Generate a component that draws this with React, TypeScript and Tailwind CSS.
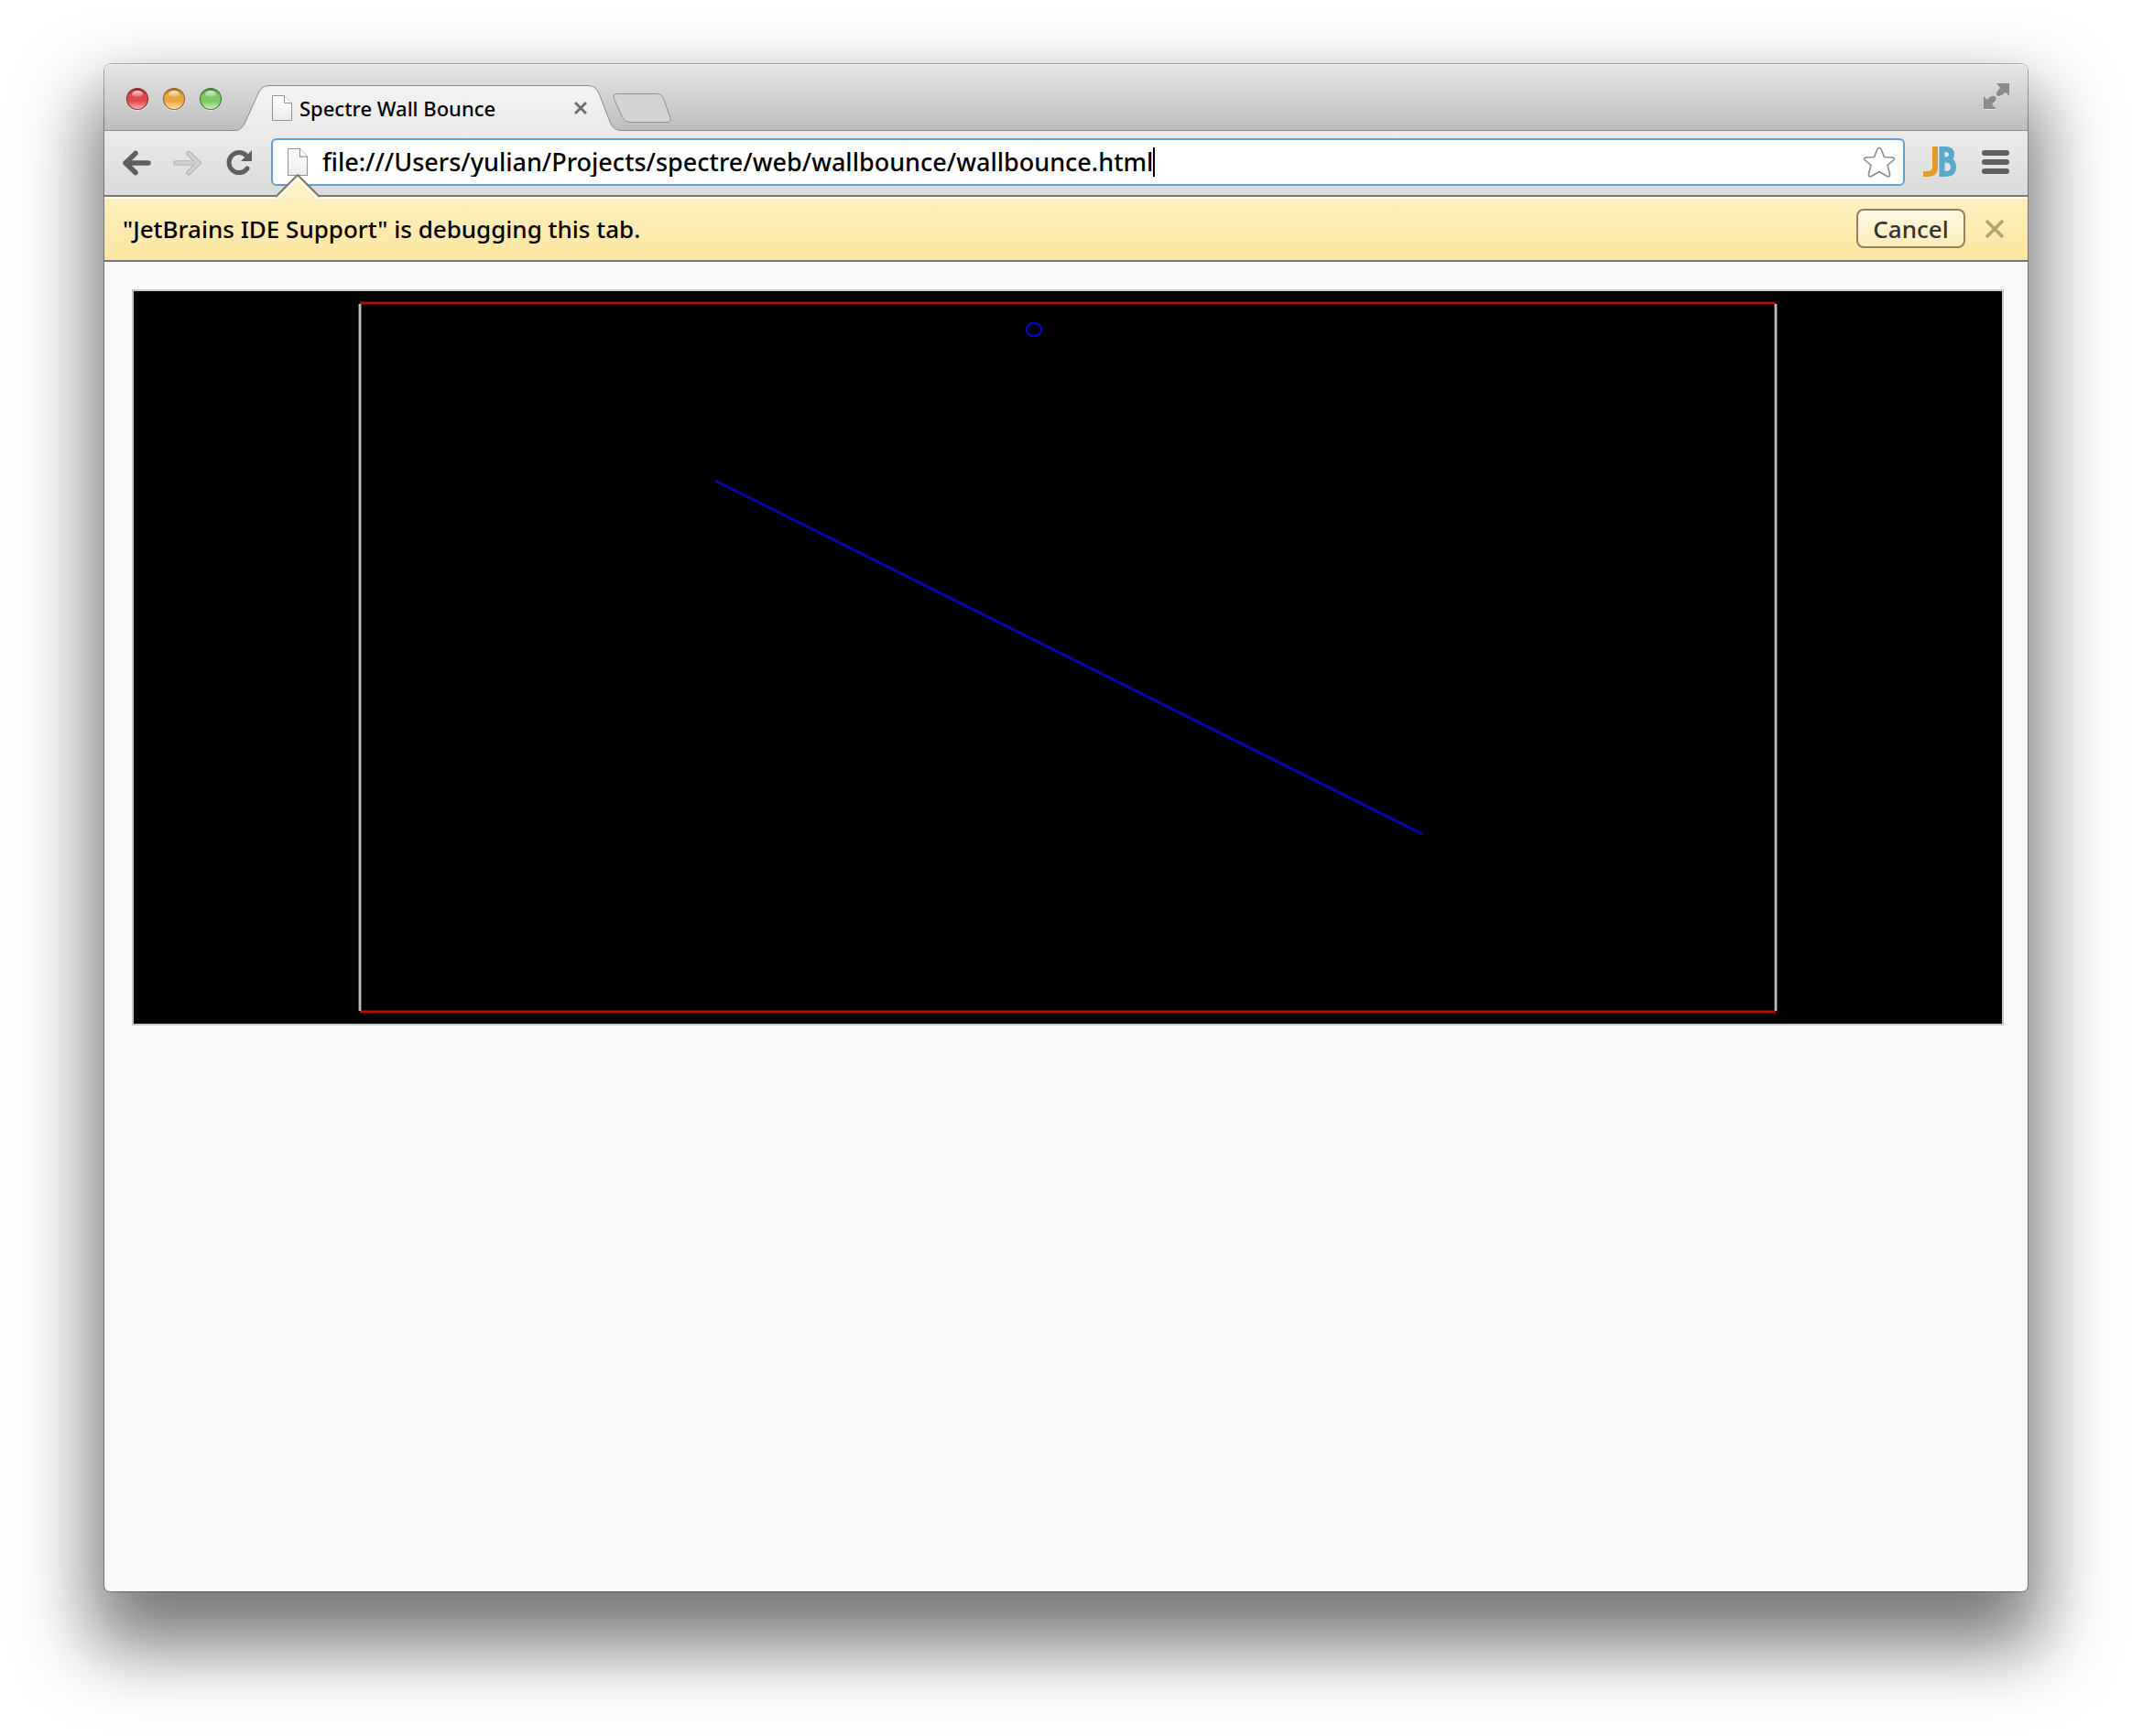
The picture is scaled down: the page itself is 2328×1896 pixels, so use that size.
import React, { useState } from 'react';

const lights = [
  { id: 'close', label: 'Close window', top: '#8f1f22', mid: '#e2474c', low: '#ffb3ad', rim: '#8c3336' },
  { id: 'minimize', label: 'Minimize window', top: '#9a6416', mid: '#e9a540', low: '#ffeaa8', rim: '#94672c' },
  { id: 'zoom', label: 'Zoom window', top: '#3d7a2b', mid: '#7cc663', low: '#d3f8bb', rim: '#4a7a3b' },
];

const TrafficLight = ({ id, label, top, mid, low, rim }: (typeof lights)[number]) => (
  <button aria-label={label} className="w-6 h-6">
    <svg viewBox="0 0 24 24" className="w-6 h-6 overflow-visible">
      <defs>
        <linearGradient id={`${id}-body`} x1="0" y1="0" x2="0" y2="1">
          <stop offset="0" stopColor={top} />
          <stop offset="0.3" stopColor={mid} />
          <stop offset="0.6" stopColor={mid} />
          <stop offset="1" stopColor={low} />
        </linearGradient>
        <linearGradient id={`${id}-shine`} x1="0" y1="0" x2="0" y2="1">
          <stop offset="0" stopColor="#fff" stopOpacity="0.85" />
          <stop offset="1" stopColor="#fff" stopOpacity="0.1" />
        </linearGradient>
      </defs>
      <circle cx="12" cy="13" r="12" fill="#fff" opacity="0.5" />
      <circle cx="12" cy="12" r="11.5" fill={`url(#${id}-body)`} stroke={rim} strokeWidth="1.2" />
      <ellipse cx="12" cy="6.5" rx="6" ry="3.6" fill={`url(#${id}-shine)`} />
    </svg>
  </button>
);

const PageIcon = ({ id, className }: { id: string; className: string }) => (
  <svg viewBox="0 0 22 28" preserveAspectRatio="none" className={className} aria-hidden="true">
    <defs>
      <linearGradient id={id} x1="0" y1="0" x2="0" y2="1">
        <stop offset="0" stopColor="#fff" />
        <stop offset="1" stopColor="#ececec" />
      </linearGradient>
    </defs>
    <path d="M.5.5H13.5L21.5 8.5V27.5H.5Z" fill={`url(#${id})`} stroke="#929292" />
    <path d="M13.5.5V8.5H21.5" fill="#fff" stroke="#929292" />
  </svg>
);

const TabStrip = () => (
  <div className="flex h-[73px] bg-linear-to-b from-[#e7e7e7] to-[#bdbdbd] rounded-t-lg border-b border-[#8f8f8f] shadow-[inset_0_1px_0_#f4f4f4]">
    <div className="flex gap-4 pl-6 pt-[26px]">
      {lights.map((light) => (
        <TrafficLight key={light.id} {...light} />
      ))}
    </div>

    {/* Active tab */}
    <div className="relative flex items-center w-[430px] h-[50px] mt-[23px] ml-[9px] pl-[46px] pr-10">
      <svg viewBox="0 0 430 51" className="absolute left-0 top-0 w-[430px] h-[51px]" aria-hidden="true">
        <defs>
          <linearGradient id="tab" x1="0" y1="0" x2="0" y2="1">
            <stop offset="0" stopColor="#f3f3f3" />
            <stop offset="1" stopColor="#eaeaea" />
          </linearGradient>
        </defs>
        <path
          d="M0 49.5H6C11 49.5 14 46 17 40L31 9C34 3 37 .5 44 .5H390C397 .5 400 3 403 9L415 40C418 47 421 49.5 429 49.5V51H0Z"
          fill="url(#tab)"
        />
        <path
          d="M0 49.5H6C11 49.5 14 46 17 40L31 9C34 3 37 .5 44 .5H390C397 .5 400 3 403 9L415 40C418 47 421 49.5 429 49.5"
          fill="none"
          stroke="#8a8a8a"
        />
      </svg>
      <PageIcon id="tab-page" className="relative w-[22px] h-7" />
      <span className="relative ml-2 text-[22px] leading-7 whitespace-nowrap">Spectre Wall Bounce</span>
      <button aria-label="Close tab" className="relative ml-auto">
        <svg viewBox="0 0 14 14" className="w-[14px] h-[14px]">
          <path d="M1 1 13 13M13 1 1 13" stroke="#6b6b6b" strokeWidth="2.8" />
        </svg>
      </button>
    </div>

    <button aria-label="New tab" className="-ml-3 h-8 mt-8">
      <svg viewBox="0 0 64 32" className="w-16 h-8">
        <path
          d="M5 .5H47C52 .5 54 2 56 7L63 27C64 30 62 31.5 59 31.5H20C14 31.5 12 29 10 25L1.5 6C.5 3 1 .5 5 .5Z"
          fill="#d3d3d3"
          stroke="#8e8e8e"
        />
      </svg>
    </button>

    <button aria-label="Full screen" className="ml-auto mr-5 mt-[21px] h-7">
      <svg viewBox="0 0 28 28" className="w-7 h-7 overflow-visible">
        <path
          d="M14 0H28V14L24 10 20 13Q16 15 14 13 13 10 18 5ZM0 14 4 18Q8 13 12 14 15 16 13 19L9 23 14 28H0Z"
          fill="#fff"
          opacity="0.5"
          transform="translate(0 1)"
        />
        <path
          d="M14 0H28V14L24 10 20 13Q16 15 14 13 13 10 18 5ZM0 14 4 18Q8 13 12 14 15 16 13 19L9 23 14 28H0Z"
          fill="#8b8b8b"
        />
      </svg>
    </button>
  </div>
);

const Toolbar = () => {
  const [url, setUrl] = useState('file:///Users/yulian/Projects/spectre/web/wallbounce/wallbounce.html');

  return (
    <div className="flex items-start h-[70px] pt-2 pl-5 pr-5 bg-linear-to-b from-[#ececec] to-[#dadada]">
      <button aria-label="Back" className="mt-[13px]">
        <svg viewBox="0 0 32 28" className="w-8 h-7">
          <path d="M14 3.5 3 14 14 24.5M3 14H28" fill="none" stroke="#5f5f5f" strokeWidth="5.5" strokeLinecap="round" strokeLinejoin="round" />
        </svg>
      </button>
      <button aria-label="Forward" className="mt-[13px] ml-[22px]">
        <svg viewBox="0 0 32 28" className="w-8 h-7">
          <path d="M18 3.5 29 14 18 24.5M29 14H4" fill="none" stroke="#b4b4b4" strokeWidth="5.5" strokeLinecap="round" strokeLinejoin="round" />
          <path d="M18 3.5 29 14 18 24.5M29 14H4" fill="none" stroke="#cfcfcf" strokeWidth="3.5" strokeLinecap="round" strokeLinejoin="round" />
        </svg>
      </button>
      <button aria-label="Reload" className="mt-[13px] ml-[26px]">
        <svg viewBox="0 0 32 28" className="w-8 h-7">
          <path d="M24 20A11 11 0 1 1 23 6" fill="none" stroke="#5f5f5f" strokeWidth="5" strokeLinecap="round" />
          <path d="M29 0V12H17Z" fill="#5f5f5f" />
        </svg>
      </button>

      <div className="flex flex-1 items-center h-[52px] ml-[18px] pl-4 pr-2 bg-white border-2 border-[#629fd6] rounded-md">
        <PageIcon id="url-page" className="w-[22px] h-[30px]" />
        <input
          aria-label="Address"
          value={url}
          onChange={(e) => setUrl(e.target.value)}
          className="ml-4 field-sizing-content bg-transparent text-[27px] leading-8 outline-none"
        />
        <span className="w-[2px] h-8 bg-black" />
        <button aria-label="Bookmark this page" className="ml-auto">
          <svg viewBox="0 0 36 34" className="w-9 h-[34px]">
            <path
              d="M18 1.5Q19.5 1.5 20.5 4L23.5 11.5 32 12Q36 12.5 33.5 15L27 20.5 29.5 29.5Q30 34 26.5 32.5L18 27.5 9.5 32.5Q6 34 6.5 29.5L9 20.5 2.5 15Q0 12.5 4 12L12.5 11.5 15.5 4Q16.5 1.5 18 1.5Z"
              fill="#fff"
              stroke="#8c8c8c"
              strokeWidth="1.6"
            />
          </svg>
        </button>
      </div>

      <button aria-label="JetBrains IDE Support" className="ml-5 mt-2">
        <svg viewBox="0 0 36 34" className="w-9 h-[34px]">
          <path d="M13 1V23Q13 31 5 31H0" fill="none" stroke="#e49b2c" strokeWidth="6" />
          <path
            d="M20.5 4H24Q31 4 31 9.5 31 15.5 24 15.5H20.5M24 15.5Q33 15.5 33 23.5 33 31 24 31H20.5V1"
            fill="none"
            stroke="#5aa9cc"
            strokeWidth="6"
          />
        </svg>
      </button>
      <button aria-label="Menu" className="flex flex-col gap-1 ml-7 mt-[13px]">
        <span className="w-[30px] h-[6px] rounded-full bg-[#5f5f5f]" />
        <span className="w-[30px] h-[6px] rounded-full bg-[#5f5f5f]" />
        <span className="w-[30px] h-[6px] rounded-full bg-[#5f5f5f]" />
      </button>
    </div>
  );
};

const InfoBar = () => (
  <div className="relative flex items-center h-[73px] pl-5 pr-[26px] bg-linear-to-b from-[#fcf0bf] to-[#fce5a2] border-y-2 border-[#7b7573] shadow-[inset_0_2px_0_#fffbea]">
    {/* Arrow pointing at the page icon */}
    <svg viewBox="0 0 48 27" className="absolute left-[187px] -top-[25px] w-12 h-[27px]" aria-hidden="true">
      <path d="M1 25 24 2 47 25V27H1Z" fill="#fcf1c4" />
      <path d="M2 27 24 5 46 27" fill="none" stroke="#fffbea" strokeWidth="2" />
      <path d="M0 25 24 1 48 25" fill="none" stroke="#7b7573" strokeWidth="2" />
    </svg>
    <p className="text-[26px] leading-8">"JetBrains IDE Support" is debugging this tab.</p>
    <button className="ml-auto h-[43px] w-[119px] border-2 border-[#93815d] rounded-lg bg-linear-to-b from-[#fff9e4] to-[#fcecb9] text-[26px] leading-8 text-[#333]">
      Cancel
    </button>
    <button aria-label="Dismiss" className="ml-[22px]">
      <svg viewBox="0 0 20 20" className="w-5 h-5">
        <path d="M1 1 19 19M19 1 1 19" stroke="#b3a173" strokeWidth="3.5" />
      </svg>
    </button>
  </div>
);

const Scene = () => (
  <svg viewBox="0 0 2040 800" className="block w-full bg-black border-2 border-[#c8c8c8]">
    <path d="M247 13H1793M247 787H1793" stroke="#b30c0c" strokeWidth="2.8" />
    <path d="M247 14V786M1793 14V786" stroke="#bdbdbd" strokeWidth="2.8" />
    <path d="M635 207 1407 593" stroke="#0404a8" strokeWidth="3" />
    <ellipse cx="983" cy="42" rx="8" ry="7" fill="none" stroke="#0404b0" strokeWidth="2.6" />
  </svg>
);

const App = () => {
  return (
    <div className="min-h-screen flex flex-col bg-white px-[114px] pt-[70px] pb-[158px] overflow-hidden font-['Noto_Sans',sans-serif] font-medium text-black">
      <div className="flex-1 flex flex-col bg-[#f8f8f8] rounded-t-lg rounded-b-md shadow-[0_0_0_1px_rgba(0,0,0,0.3),0_46px_80px_15px_rgba(0,0,0,0.53)]">
        <TabStrip />
        <Toolbar />
        <InfoBar />
        <main className="pt-[30px] pl-[30px] pr-[26px]">
          <Scene />
        </main>
      </div>
    </div>
  );
};

export default App;
